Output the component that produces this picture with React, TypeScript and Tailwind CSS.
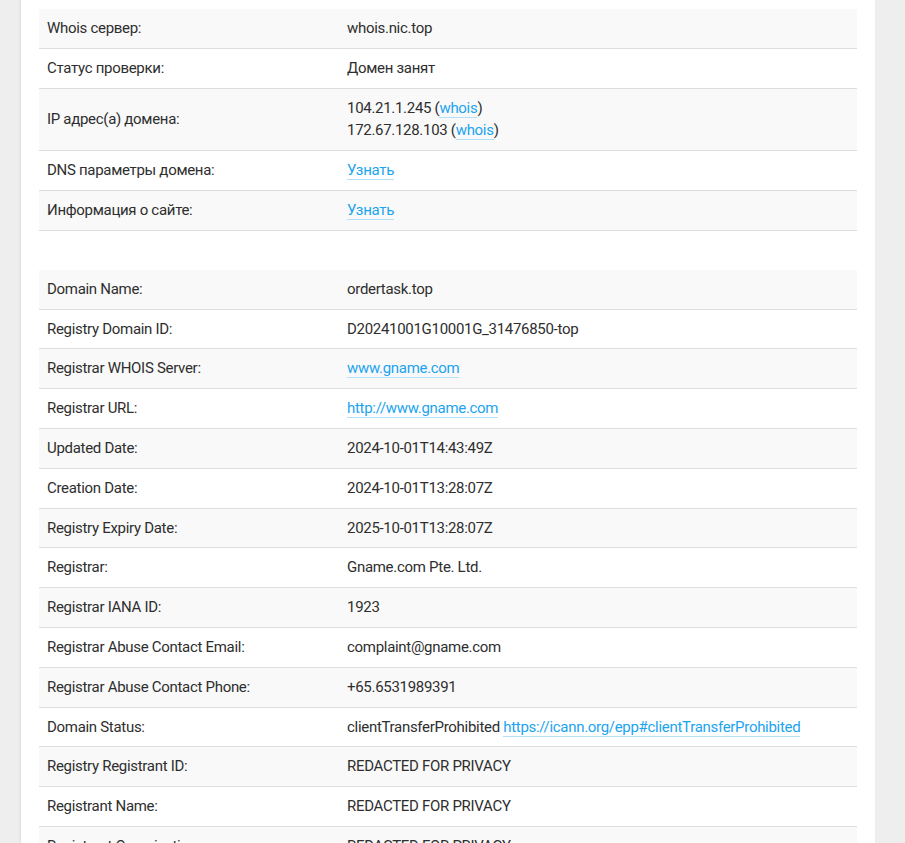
import React from "react";

type Row = { label: string; value: React.ReactNode };

const Link = ({ children }: { children: React.ReactNode }) => (
  <a href="#" className="text-[#1ba4ef] border-b border-[#b3e1fa] no-underline">
    {children}
  </a>
);

const serverRows: Row[] = [
  { label: "Whois сервер:", value: "whois.nic.top" },
  { label: "Статус проверки:", value: "Домен занят" },
  {
    label: "IP адрес(а) домена:",
    value: (
      <>
        <div>
          104.21.1.245 (<Link>whois</Link>)
        </div>
        <div>
          172.67.128.103 (<Link>whois</Link>)
        </div>
      </>
    ),
  },
  { label: "DNS параметры домена:", value: <Link>Узнать</Link> },
  { label: "Информация о сайте:", value: <Link>Узнать</Link> },
];

const whoisRows: Row[] = [
  { label: "Domain Name:", value: "ordertask.top" },
  { label: "Registry Domain ID:", value: "D20241001G10001G_31476850-top" },
  { label: "Registrar WHOIS Server:", value: <Link>www.gname.com</Link> },
  { label: "Registrar URL:", value: <Link>http://www.gname.com</Link> },
  { label: "Updated Date:", value: "2024-10-01T14:43:49Z" },
  { label: "Creation Date:", value: "2024-10-01T13:28:07Z" },
  { label: "Registry Expiry Date:", value: "2025-10-01T13:28:07Z" },
  { label: "Registrar:", value: "Gname.com Pte. Ltd." },
  { label: "Registrar IANA ID:", value: "1923" },
  { label: "Registrar Abuse Contact Email:", value: "complaint@gname.com" },
  { label: "Registrar Abuse Contact Phone:", value: "+65.6531989391" },
  {
    label: "Domain Status:",
    value: (
      <>
        clientTransferProhibited <Link>https://icann.org/epp#clientTransferProhibited</Link>
      </>
    ),
  },
  { label: "Registry Registrant ID:", value: "REDACTED FOR PRIVACY" },
  { label: "Registrant Name:", value: "REDACTED FOR PRIVACY" },
  { label: "Registrant Organization:", value: "REDACTED FOR PRIVACY" },
  { label: "Registrant Street:", value: "REDACTED FOR PRIVACY" },
];

const InfoTable = ({ rows }: { rows: Row[] }) => (
  <table className="w-full border-collapse">
    <tbody>
      {rows.map((row, i) => (
        <tr key={i} className={`border-b border-[#dddddd] ${i % 2 === 0 ? "bg-[#f9f9f9]" : "bg-white"}`}>
          <td className="w-[300px] px-2 py-2 align-middle">{row.label}</td>
          <td className="px-2 py-2 align-middle">{row.value}</td>
        </tr>
      ))}
    </tbody>
  </table>
);

export default function App() {
  return (
    <div
      className="min-h-screen bg-[#eeeeee] pl-[21px] pr-[30px] text-[15px] leading-[22.8px] tracking-[-0.3px] text-[#2e2e2e]"
      style={{ fontFamily: "Roboto, 'Liberation Sans', sans-serif" }}
    >
      <div className="bg-white shadow-[-1px_0_2px_rgba(0,0,0,0.08)] px-[18px] pt-[9px] pb-10">
        <InfoTable rows={serverRows} />
        <div className="h-[39px]" />
        <InfoTable rows={whoisRows} />
      </div>
    </div>
  );
}
